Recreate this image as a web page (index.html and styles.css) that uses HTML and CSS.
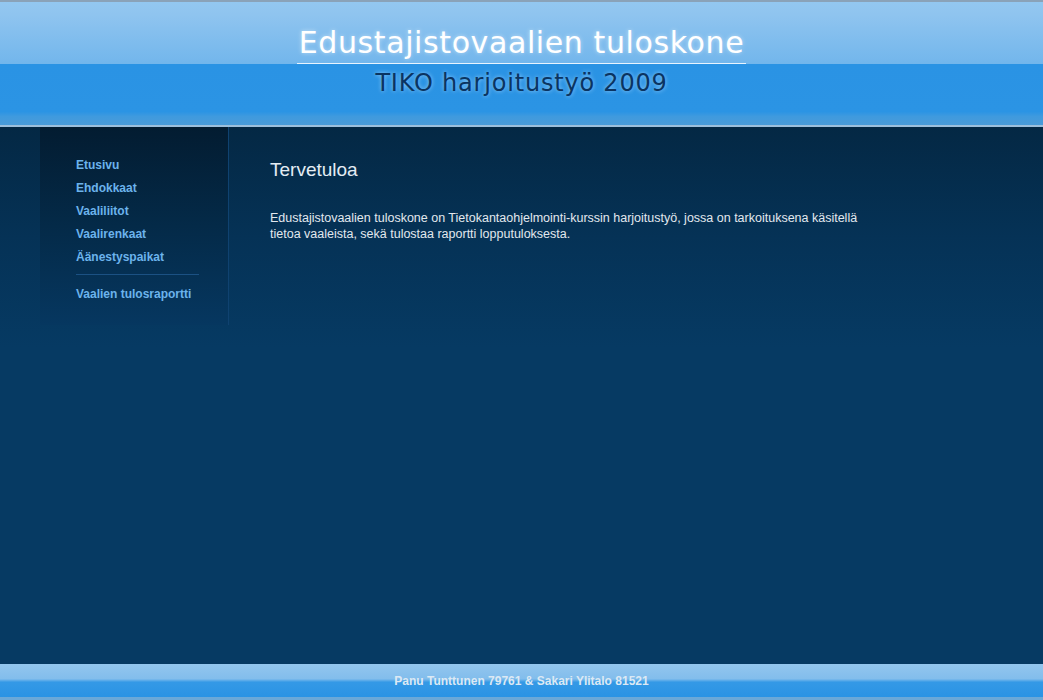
FILE: index.html
```html
<!DOCTYPE html>
<html lang="fi">
<head>
<meta charset="utf-8">
<title>Edustajistovaalien tuloskone</title>
<link rel="stylesheet" href="styles.css">
</head>
<body>
<div class="page">
  <header class="header">
    <div class="header-top">
      <h1 class="title">Edustajistovaalien tuloskone</h1>
    </div>
    <div class="header-bottom">
      <div class="subtitle">TIKO harjoitustyö 2009</div>
    </div>
  </header>
  <div class="body">
    <nav class="sidebar">
      <ul class="menu">
        <li><a href="#">Etusivu</a></li>
        <li><a href="#">Ehdokkaat</a></li>
        <li><a href="#">Vaaliliitot</a></li>
        <li><a href="#">Vaalirenkaat</a></li>
        <li><a href="#">Äänestyspaikat</a></li>
      </ul>
      <div class="menu-sep"></div>
      <ul class="menu">
        <li><a href="#">Vaalien tulosraportti</a></li>
      </ul>
    </nav>
    <main class="main">
      <h2 class="heading">Tervetuloa</h2>
      <p class="text">Edustajistovaalien tuloskone on Tietokantaohjelmointi-kurssin harjoitustyö, jossa on tarkoituksena käsitellä tietoa vaaleista, sekä tulostaa raportti lopputuloksesta.</p>
    </main>
  </div>
  <footer class="footer">Panu Tunttunen 79761 &amp; Sakari Ylitalo 81521</footer>
</div>
</body>
</html>
```
FILE: styles.css
```css
html, body {
  margin: 0;
  padding: 0;
  height: 100%;
}
body {
  background: #063a63;
  font-family: "Liberation Sans", Arial, sans-serif;
}
.page {
  min-height: 100vh;
  display: flex;
  flex-direction: column;
}
.header {
  border-top: 2px solid #8aa2b8;
}
.header-top {
  height: 62px;
  background: linear-gradient(#93c7f0 0%, #8fc4ef 20%, #72b6ec 100%);
  display: flex;
  justify-content: center;
  align-items: flex-end;
}
.title {
  margin: 0;
  font-family: "DejaVu Sans", Verdana, sans-serif;
  font-weight: normal;
  font-size: 30px;
  letter-spacing: 0.6px;
  color: #ffffff;
  line-height: 34px;
  padding: 0 2px 3px;
  border-bottom: 1px solid #e8f4ff;
  text-shadow: 0 0 4px rgba(255,255,255,0.5);
}
.header-bottom {
  height: 61px;
  background: linear-gradient(#2a93e4 0%, #2b94e4 78%, #3f9ade 86%, #4a9bd8 100%);
  border-bottom: 2px solid #9cbfdc;
  display: flex;
  justify-content: center;
}
.subtitle {
  font-family: "DejaVu Sans", Verdana, sans-serif;
  font-size: 24px;
  letter-spacing: 0.8px;
  line-height: 28px;
  margin-top: 5px;
  color: #0a3461;
  text-shadow: 0 0 4px rgba(170,215,255,0.85);
}
.body {
  flex: 1;
  display: flex;
  background: linear-gradient(#042844 0px, #053256 110px, #063a63 220px, #063a63 100%);
}
.sidebar {
  margin-left: 40px;
  width: 189px;
  height: 198px;
  padding-top: 28px;
  box-sizing: border-box;
  background: linear-gradient(#031c31 0%, #042a48 50%, #063760 100%);
  border-right: 1px solid #0f4270;
}
.menu {
  list-style: none;
  margin: 0;
  padding: 0 0 0 36px;
}
.menu li {
  height: 23px;
  line-height: 18px;
}
.menu a {
  color: #6cb3ec;
  font-weight: bold;
  font-size: 12px;
  text-decoration: none;
}
.menu-sep {
  margin: 4px 29px 9px 36px;
  border-top: 1px solid #1b5183;
}
.main {
  padding-left: 41px;
  padding-top: 32px;
}
.heading {
  margin: 0;
  font-weight: normal;
  font-size: 19px;
  line-height: 22px;
  color: #e4ecf4;
}
.text {
  margin: 29px 0 0;
  width: 605px;
  font-size: 12.5px;
  line-height: 16px;
  color: #e2e8ee;
}
.footer {
  height: 33px;
  background: linear-gradient(#93c6ee 0%, #82bdec 45%, #3499e6 55%, #2a93e4 100%);
  border-bottom: 3px solid #6aa8d8;
  text-align: center;
  color: #dce9f4;
  font-weight: bold;
  font-size: 12px;
  line-height: 34px;
}
```
